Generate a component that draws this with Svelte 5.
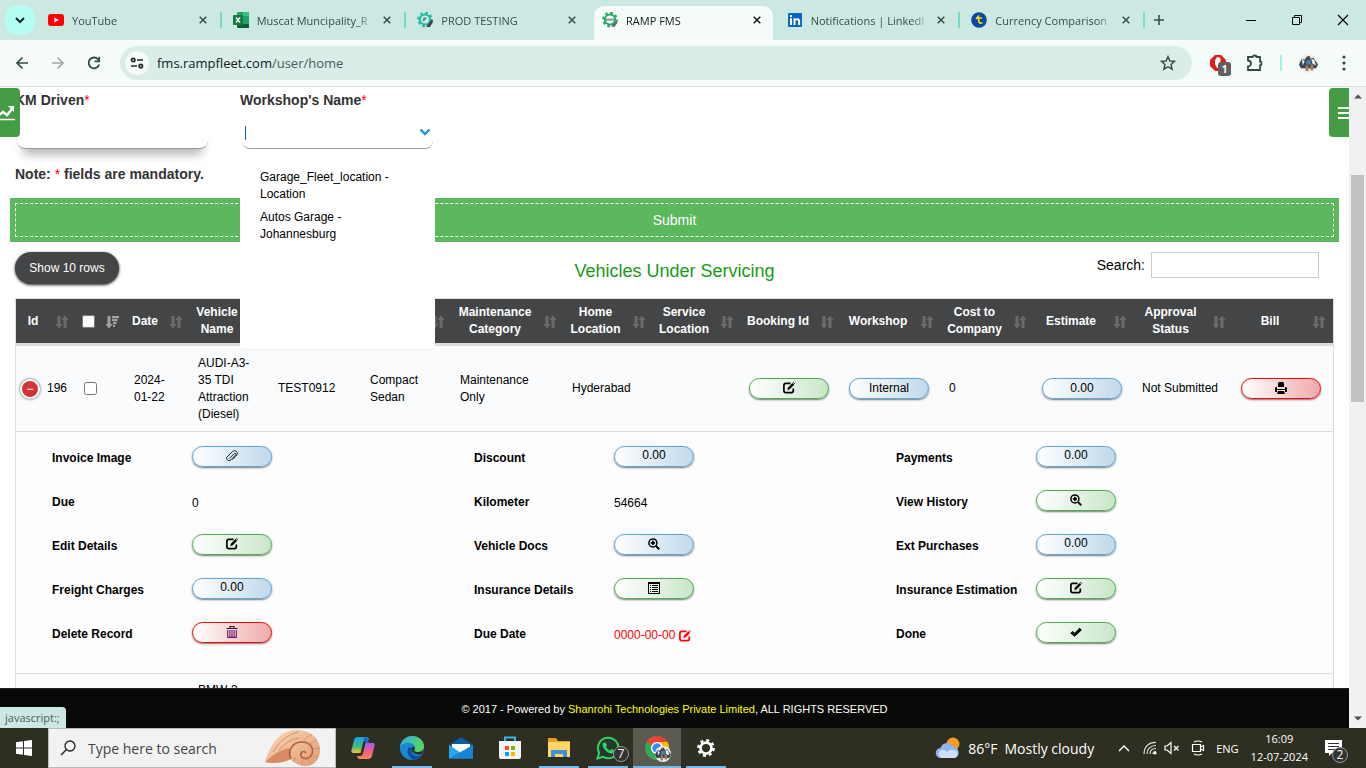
<script>
  const tabs = [
    { title: 'YouTube', icon: 'youtube' },
    { title: 'Muscat Muncipality_R', icon: 'excel' },
    { title: 'PROD TESTING', icon: 'gearteal' },
    { title: 'RAMP FMS', icon: 'geargreen', active: true },
    { title: 'Notifications | LinkedI', icon: 'linkedin' },
    { title: 'Currency Comparison', icon: 'currency' }
  ];

  const columns = [
    { title: 'Id', width: 60 },
    { title: '', width: 50, check: true },
    { title: 'Date', width: 64 },
    { title: 'Vehicle Name', width: 80 },
    { title: '', width: 92 },
    { title: '', width: 90 },
    { title: 'Maintenance Category', width: 112 },
    { title: 'Home Location', width: 89 },
    { title: 'Service Location', width: 88 },
    { title: 'Booking Id', width: 100 },
    { title: 'Workshop', width: 100 },
    { title: 'Cost to Company', width: 93 },
    { title: 'Estimate', width: 100 },
    { title: 'Approval Status', width: 99 },
    { title: 'Bill', width: 100 }
  ];

  const details = [
    { label: 'Invoice Image', color: 'blue', icon: 'clip' },
    { label: 'Discount', color: 'blue', text: '0.00' },
    { label: 'Payments', color: 'blue', text: '0.00' },
    { label: 'Due', text: '0' },
    { label: 'Kilometer', text: '54664' },
    { label: 'View History', color: 'green', icon: 'zoom' },
    { label: 'Edit Details', color: 'green', icon: 'edit' },
    { label: 'Vehicle Docs', color: 'blue', icon: 'zoom' },
    { label: 'Ext Purchases', color: 'blue', text: '0.00' },
    { label: 'Freight Charges', color: 'blue', text: '0.00' },
    { label: 'Insurance Details', color: 'green', icon: 'list' },
    { label: 'Insurance Estimation', color: 'green', icon: 'edit' },
    { label: 'Delete Record', color: 'red', icon: 'trash' },
    { label: 'Due Date', text: '0000-00-00', date: true },
    { label: 'Done', color: 'green', icon: 'check' }
  ];

  const workshops = ['Garage_Fleet_location - Location', 'Autos Garage - Johannesburg'];

  const apps = [
    { name: 'copilot' },
    { name: 'edge', open: true },
    { name: 'mail' },
    { name: 'store' },
    { name: 'folder', open: true },
    { name: 'whatsapp', open: true },
    { name: 'chrome', open: true, current: true },
    { name: 'settings', open: true }
  ];

  let km = $state('');
  let workshop = $state('');
  let search = $state('');
</script>

{#snippet favicon(name)}
  <svg class="favicon" viewBox="0 0 16 16" aria-hidden="true">
    {#if name === 'youtube'}
      <rect x="0" y="2" width="16" height="12" rx="3" fill="#f00" />
      <path d="M6.3 5.4v5.2L10.8 8z" fill="#fff" />
    {:else if name === 'excel'}
      <rect x="4" y="0" width="12" height="16" rx="1" fill="#21a366" />
      <path d="M4 4h6v4H4z" fill="#107c41" />
      <path d="M10 0h5a1 1 0 0 1 1 1v3h-6z" fill="#33c481" />
      <path d="M4 8h6v4H4zM10 12h6v3a1 1 0 0 1-1 1H5a1 1 0 0 1-1-1v-3z" fill="#185c37" />
      <rect x="0" y="3" width="10" height="10" rx="1" fill="#107c41" />
      <path d="M3 5.5l4 5M7 5.5l-4 5" stroke="#fff" stroke-width="1.5" />
    {:else if name === 'gearteal' || name === 'geargreen'}
      {@const tone = name === 'gearteal' ? '#1fb8a0' : '#21a868'}
      <circle cx="8" cy="7.5" r="6.8" fill="none" stroke={tone} stroke-width="2" stroke-dasharray="2.67 2.67" />
      <circle cx="8" cy="7.5" r="5.1" fill="none" stroke={tone} stroke-width="2" />
      {#if name === 'gearteal'}
        <path d="M5.5 9.5l1-4h3l-1 2.5z" fill="#478d86" />
        <path d="M9 15l6-8 1 3-3 5z" fill="#444" />
      {:else}
        <path d="M4 6.6h9v2H4z" fill="#8b9494" />
        <path d="M9 14.6l5-5 1.6.8-3 4.4z" fill="#666" />
      {/if}
    {:else if name === 'linkedin'}
      <rect x="1" y="1" width="14" height="14" rx="1" fill="#0a66c2" />
      <path d="M3 6.2h2V13H3zM3 3h2v2H3zM6.5 6.2h2v1c1-1.6 4.6-1.6 4.6 1.8v4h-2V9.5c0-2.1-2.6-2-2.6 0V13h-2z" fill="#fff" />
    {:else}
      <circle cx="8" cy="8" r="7.8" fill="#0d47a1" />
      <path d="M8 3.5L5 7M6 6h5M8 6c-1 3-.5 6 3.500 4.800" fill="none" stroke="#ffe600" stroke-width="1.6" />
    {/if}
  </svg>
{/snippet}

{#snippet cross()}
  <svg width="8" height="8" viewBox="0 0 8 8" aria-hidden="true">
    <path d="M.7.7l6.6 6.6M7.3.7L.7 7.3" stroke="currentColor" stroke-width="1.5" />
  </svg>
{/snippet}

{#snippet glyph(name)}
  <svg class="glyph" viewBox="0 0 12 12" aria-hidden="true">
    {#if name === 'edit'}
      <path d="M7.5 1.3H2.8Q.9 1.3.9 3.2v5.500q0 1.900 1.900 1.900h5.600q1.900 0 1.900-1.900V6.500" fill="none" stroke="currentColor" stroke-width="1.7" />
      <path d="M4.2 8.3l.8-2.7L9.5 1.1l1.7 1.7-4.5 4.5z" fill="currentColor" />
      <path d="M10.3.3l1.5 1.4" stroke="currentColor" stroke-width="1" />
    {:else if name === 'zoom'}
      <circle cx="4.9" cy="4.9" r="4" fill="none" stroke="currentColor" stroke-width="1.5" />
      <path d="M4.9 2.8v4.2M2.8 4.9h4.2" stroke="currentColor" stroke-width="1.8" />
      <path d="M7.9 7.9l3.3 3.3" stroke="currentColor" stroke-width="2" />
    {:else if name === 'clip'}
      <path d="M3.2 8.6l5-5c1-1 2.300.3 1.400 1.300L5.200 9.500C3.300 12-.7 9.700.9 7.100L6.300 1.600c2.600-2.400 6.500.5 4.500 3.400L6.500 9.500" fill="none" stroke="#222" stroke-width="1" />
    {:else if name === 'list'}
      <path d="M0 0h12v12H0zM1 2v9h10V2z" fill="currentColor" fill-rule="evenodd" />
      <path d="M2 3.500h1M4 3.500h6M2 5.500h1M4 5.500h6M2 7.500h1M4 7.500h6M2 9.500h1M4 9.500h6" stroke="currentColor" stroke-width="1" />
    {:else if name === 'trash'}
      <path d="M.5 2.500h11M4 2V.5h4V2" fill="none" stroke="#222" stroke-width="1.2" />
      <path d="M1.700 4v7.400h8.600V4M3.900 4v7M6 4v7M8.100 4v7" fill="none" stroke="#7a1070" stroke-width="1.1" />
    {:else if name === 'check'}
      <path d="M.3 7.2l2.2-2.3 2.2 1.9L9.6 1.700l2.200 2.200-7.100 6.800z" fill="currentColor" />
    {:else if name === 'print'}
      <path d="M4 0h4l1 1v4H3V1zM0 6l1-1h1v2h8V5h1l1 1v4h-2V8H2v2H0zM3 9h6l1 3H2z" fill="currentColor" />
    {/if}
  </svg>
{/snippet}

{#snippet sorter(sorted)}
  <svg class="sorter" class:sorted viewBox="0 0 14 14" aria-hidden="true">
    <path d="M2.500 1h3v8h2.200L4 13.500.3 9h2.200z" fill="currentColor" />
    {#if sorted}
      <path d="M7 1h7v2.200H7zM7 4h5.500v2.200H7zM8 7h3.500v2.200H8zM8 10h2v2H8z" fill="currentColor" />
    {:else}
      <path d="M8.500 13h3V5h2.200L10 .5 6.300 5h2.200z" fill="currentColor" />
    {/if}
  </svg>
{/snippet}

{#snippet appIcon(name)}
  <svg class="app-icon" viewBox="0 0 24 24" aria-hidden="true">
    {#if name === 'copilot'}
      <defs>
        <linearGradient id="cpa" x1="0" y1="0" x2="0" y2="1">
          <stop offset="0" stop-color="#19a7e8" /><stop offset=".6" stop-color="#40b87a" /><stop offset="1" stop-color="#f4c430" />
        </linearGradient>
        <linearGradient id="cpb" x1="0" y1="0" x2="0" y2="1">
          <stop offset="0" stop-color="#a45cf0" /><stop offset=".5" stop-color="#ed5b8c" /><stop offset="1" stop-color="#fb8a4c" />
        </linearGradient>
      </defs>
      <path d="M7 1h8c2 0 2.500 1 3 3h-3c-2 0-2.500 1-3 3l-2.500 10H3c-3 0-3-2-2-5l2-8c.7-2 2-3 4-3z" fill="url(#cpa)" />
      <path d="M17 23H9c-2 0-2.500-1-3-3h3c2 0 2.500-1 3-3l2.500-10H21c3 0 3 2 2 5l-2 8c-.7 2-2 3-4 3z" fill="url(#cpb)" />
      <path d="M14 1c2 0 2.500 1 3 3l1 3h-3l-2-3c-.5-2 0-3 1-3z" fill="#2464d8" />
    {:else if name === 'edge'}
      <defs>
        <linearGradient id="edg" x1="0" y1="0" x2="1" y2=".4">
          <stop offset="0" stop-color="#28a8ea" /><stop offset="1" stop-color="#59d65c" />
        </linearGradient>
      </defs>
      <circle cx="12" cy="12" r="12" fill="#1787d8" />
      <path d="M0 11C1 4 6 0 12 0c7 0 12 5 12 10 0 4-3 6-6 6-4 0-5-1-3-3C16 9 12 7 8 7c-4 0-7 2-8 4z" fill="url(#edg)" />
      <path d="M9 11c-3 4-1 10 4 12.900 4 .2 7-2 9-5-6 3-13-1-10-7z" fill="#12509e" />
      <path d="M12 11c-2 5 4 9 10 7l2-6c-1 3-4 4.500-7 4-3-.3-3-1.500-2-3 .5-1-2-3-3-2z" fill="#2d2d22" />
    {:else if name === 'mail'}
      <path d="M0 9l12-8 12 8v13H0z" fill="#0a5ba8" />
      <path d="M3 8h18v10H3z" fill="#f6fafd" />
      <path d="M0 9l12 8 12-8v13.500H0z" fill="#2aa7ec" />
      <path d="M0 22.500L24 9v13.500z" fill="#1684d2" />
    {:else if name === 'store'}
      <path d="M7 6V1.500h10V6" fill="none" stroke="#35b5f0" stroke-width="2" />
      <path d="M1 5h22v16q0 2-2 2H3q-2 0-2-2z" fill="#f4f4f4" />
      <path d="M7 10h4v4H7z" fill="#f25022" /><path d="M13 10h4v4h-4z" fill="#7fba00" />
      <path d="M7 16h4v4H7z" fill="#00a4ef" /><path d="M13 16h4v4h-4z" fill="#ffb900" />
    {:else if name === 'folder'}
      <path d="M1 2h8l2 3h12v4H1z" fill="#e3a21a" />
      <path d="M1 6h22v15H1z" fill="#ffd768" />
      <path d="M4 21v-7h16v7h-4v-3H8v3z" fill="#3f92d9" />
    {:else if name === 'whatsapp'}
      <path d="M1.500 22.500l1.600-5.800a10.300 10.300 0 1 1 4 4.200z" fill="#25382c" stroke="#2fd463" stroke-width="2" />
      <path d="M8 6.500c-2 1-2 3 0 6s5 5 7.500 5 3-3 2-3.500l-2.300-1-1.200 1.500c-2-.8-3.200-2-4-3.700l1-1.300-1-2.500z" fill="#2fd463" />
    {:else if name === 'chrome'}
      <circle cx="12" cy="12" r="12" fill="#34a853" />
      <path d="M12 12L1.600 6A12 12 0 0 1 22.400 6z" fill="#ea4335" />
      <path d="M12 12V6h10.400A12 12 0 0 1 12 24z" fill="#fbbc05" />
      <circle cx="12" cy="12" r="6" fill="#fff" /><circle cx="12" cy="12" r="4.700" fill="#4285f4" />
    {:else}
      <circle cx="12" cy="12" r="6" fill="none" stroke="#fff" stroke-width="3" />
      <circle cx="12" cy="12" r="8.300" fill="none" stroke="#fff" stroke-width="2.800" stroke-dasharray="3.260 3.260" />
    {/if}
  </svg>
{/snippet}

{#snippet portrait()}
  <svg class="portrait" viewBox="0 0 20 20" aria-hidden="true">
    <circle cx="10" cy="10" r="10" fill="#e9eef0" />
    <path d="M0 11l3-6 3 1 2-3 4 2 3-1 5 7-2 4H2z" fill="#3a4450" />
    <path d="M3 5l3 3-2 4zM13 5l3 1 2 6-4-2z" fill="#f3f3f3" />
    <path d="M8 6h4l1 5H7z" fill="#4d7fae" />
    <path d="M7 12h3v6H7zM12 11h3v6h-3z" fill="#a77b55" />
    <circle cx="10" cy="4" r="2" fill="#5b4338" />
  </svg>
{/snippet}

<div class="screen">
  <header class="tabbar">
    <button class="tab-search" aria-label="Search tabs">
      <svg width="10" height="7" viewBox="0 0 10 7"><path d="M1 1l4 4 4-4" fill="none" stroke="#123" stroke-width="2" /></svg>
    </button>
    <div class="tabs">
      {#each tabs as tab}
        <div class="tab" class:active={tab.active}>
          {@render favicon(tab.icon)}
          <span class="tab-title">{tab.title}</span>
          <button class="tab-close" aria-label="Close {tab.title}">{@render cross()}</button>
        </div>
      {/each}
    </div>
    <button class="new-tab" aria-label="New tab">
      <svg width="12" height="12" viewBox="0 0 12 12"><path d="M6 1v10M1 6h10" stroke="#30504b" stroke-width="1.6" /></svg>
    </button>
    <div class="window-buttons">
      <button aria-label="Minimize"><svg width="12" height="12" viewBox="0 0 12 12"><path d="M1 6.500h10" stroke="#000" /></svg></button>
      <button aria-label="Restore"><svg width="12" height="12" viewBox="0 0 12 12"><path d="M1.500 3.500h7v7h-7zM3.500 3.500v-2h7v7h-2" fill="none" stroke="#000" /></svg></button>
      <button aria-label="Close"><svg width="12" height="12" viewBox="0 0 12 12"><path d="M1 1l10 10M11 1L1 11" stroke="#000" stroke-width="1.2" /></svg></button>
    </div>
  </header>

  <nav class="toolbar">
    <button class="nav-button" aria-label="Back">
      <svg width="14" height="14" viewBox="0 0 14 14"><path d="M13 7H2M7.500 1.500L2 7l5.500 5.500" fill="none" stroke="#2f4b47" stroke-width="1.7" /></svg>
    </button>
    <button class="nav-button" aria-label="Forward">
      <svg width="14" height="14" viewBox="0 0 14 14"><path d="M1 7h11M6.500 1.500L12 7l-5.500 5.500" fill="none" stroke="#9fa8a5" stroke-width="1.7" /></svg>
    </button>
    <button class="nav-button" aria-label="Reload">
      <svg width="14" height="14" viewBox="0 0 14 14"><path d="M12.200 8.500A5.400 5.400 0 1 1 11 3.200L12.500 5" fill="none" stroke="#2f4b47" stroke-width="1.8" /><path d="M13 .8v5.400H7.600V4.600h3.800V.8z" fill="#2f4b47" /></svg>
    </button>
    <div class="address">
      <button class="site-info" aria-label="Site information">
        <svg width="14" height="12" viewBox="0 0 14 12"><g fill="none" stroke="#1f2a29" stroke-width="1.7"><circle cx="3.200" cy="3" r="1.700" /><path d="M7 3h6M1 9h6" /><circle cx="10.800" cy="9" r="1.700" /></g></svg>
      </button>
      <span class="url">fms.rampfleet.com<span>/user/home</span></span>
      <svg class="star" width="16" height="16" viewBox="0 0 16 16"><path d="M8 1.600l1.900 4.400 4.700.4-3.600 3.100 1.100 4.700L8 11.700l-4.100 2.500L5 9.500 1.400 6.400l4.700-.4z" fill="none" stroke="#3a4a48" stroke-width="1.4" /></svg>
    </div>
    <div class="extensions">
      <span class="blocker">
        <svg width="16" height="16" viewBox="0 0 16 16"><path d="M5 0h6l5 5v6l-5 5H5l-5-5V5z" fill="#e21b1b" /><path d="M5 9V4.500h1.300V2.500h1.400V2h1.400v.8h1.400v5l1.500-.5-2 5.700H7z" fill="#fff" /></svg>
        <span class="blocker-count">1</span>
      </span>
      <svg class="puzzle" width="18" height="18" viewBox="0 0 18 18"><path d="M2 3h4.500a2 1.500 0 0 1 4 0H14v4.500a1.500 2 0 0 1 0 4V16H2v-3.500a3 3 0 0 0 0-6z" fill="none" stroke="#2f4b47" stroke-width="1.8" /></svg>
      <span class="divider"></span>
      {@render portrait()}
      <svg class="dots" width="4" height="16" viewBox="0 0 4 16"><g fill="#2f4b47"><circle cx="2" cy="2" r="1.600" /><circle cx="2" cy="8" r="1.600" /><circle cx="2" cy="14" r="1.600" /></g></svg>
    </div>
  </nav>

  <div class="viewport">
    <main class="page">
      <form class="service-form" onsubmit={(e) => e.preventDefault()}>
        <div class="fields">
          <div class="field">
            <label for="km">KM Driven<b>*</b></label>
            <input id="km" class="raised" type="text" bind:value={km} />
          </div>
          <div class="field">
            <label for="workshop">Workshop's Name<b>*</b></label>
            <input id="workshop" type="text" role="combobox" aria-expanded="true" aria-controls="workshop-list" bind:value={workshop} />
            <span class="caret"></span>
            <svg class="chevron" width="12" height="8" viewBox="0 0 12 8"><path d="M1.500 1.500L6 6l4.500-4.500" fill="none" stroke="#1e90e0" stroke-width="2.4" /></svg>
            <ul id="workshop-list" class="options" role="listbox">
              {#each workshops as option}
                <li role="option" aria-selected="false">{option}</li>
              {/each}
            </ul>
          </div>
        </div>
        <p class="note">Note: <b>*</b> fields are mandatory.</p>
        <button class="submit" type="submit"><span>Submit</span></button>
      </form>

      <div class="table-tools">
        <button class="show-rows">Show 10 rows</button>
        <h3>Vehicles Under Servicing</h3>
        <label class="search">Search: <input type="text" bind:value={search} /></label>
      </div>

      <table>
        <colgroup>
          {#each columns as column}
            <col style="width: {column.width}px" />
          {/each}
        </colgroup>
        <thead>
          <tr>
            {#each columns as column}
              <th>
                {#if column.check}
                  <input type="checkbox" aria-label="Select all" />
                {:else}
                  {column.title}
                {/if}
                {@render sorter(column.check)}
              </th>
            {/each}
          </tr>
        </thead>
        <tbody>
          <tr class="record">
            <td><span class="id-cell"><button class="collapse" aria-label="Collapse row">−</button>196</span></td>
            <td><input type="checkbox" aria-label="Select 196" /></td>
            <td>2024-01-22</td>
            <td>AUDI-A3-35 TDI Attraction (Diesel)</td>
            <td>TEST0912</td>
            <td>Compact Sedan</td>
            <td>Maintenance Only</td>
            <td>Hyderabad</td>
            <td></td>
            <td><button class="pill green" aria-label="Edit booking">{@render glyph('edit')}</button></td>
            <td><button class="pill blue">Internal</button></td>
            <td>0</td>
            <td><button class="pill blue">0.00</button></td>
            <td>Not Submitted</td>
            <td><button class="pill red" aria-label="Print bill">{@render glyph('print')}</button></td>
          </tr>
          <tr class="expanded">
            <td colspan="15">
              <ul class="details">
                {#each details as item}
                  <li>
                    <span class="detail-label">{item.label}</span>
                    {#if item.color}
                      <button class="pill {item.color}" aria-label={item.label}>
                        {#if item.icon}{@render glyph(item.icon)}{:else}{item.text}{/if}
                      </button>
                    {:else if item.date}
                      <a class="detail-value due-date" href="#due">{item.text} {@render glyph('edit')}</a>
                    {:else}
                      <span class="detail-value">{item.text}</span>
                    {/if}
                  </li>
                {/each}
              </ul>
            </td>
          </tr>
          <tr class="record next">
            <td></td><td></td><td></td>
            <td>BMW-3-<br />Series</td>
            <td colspan="11"></td>
          </tr>
        </tbody>
      </table>
    </main>

    <button class="side-tab left" aria-label="Reports">
      <svg width="16" height="16" viewBox="0 0 16 16"><path d="M0 10l4-3 4 3 5-6" fill="none" stroke="#fff" stroke-width="2.4" /><path d="M9 1h6v6z" fill="#fff" /><path d="M0 14.500h16" stroke="#fff" stroke-width="1.5" /></svg>
    </button>
    <button class="side-tab right" aria-label="Menu">
      <svg width="16" height="16" viewBox="0 0 16 16"><path d="M0 3h16M0 8h16M0 13h16" stroke="#fff" stroke-width="2" /></svg>
    </button>

    <footer>© 2017 - Powered by&nbsp;<a href="#company">Shanrohi Technologies Private Limited</a>, ALL RIGHTS RESERVED</footer>
    <div class="status">javascript:;</div>

    <div class="scrollbar">
      <svg width="8" height="5" viewBox="0 0 8 5"><path d="M0 4.500L4 .5l4 4z" fill="#505050" /></svg>
      <div class="track"><div class="thumb"></div></div>
      <svg width="8" height="5" viewBox="0 0 8 5"><path d="M0 .5l4 4 4-4z" fill="#505050" /></svg>
    </div>
  </div>

  <div class="taskbar">
    <button class="start" aria-label="Start">
      <svg width="16" height="16" viewBox="0 0 16 16"><path d="M0 2.200l7-1v6.300H0zM8 1.100L16 0v7.500H8zM0 8.500h7v6.300l-7-1zM8 8.500h8V16l-8-1.100z" fill="#fff" /></svg>
    </button>
    <div class="task-search">
      <svg width="16" height="16" viewBox="0 0 16 16"><circle cx="10" cy="6" r="5" fill="none" stroke="#222" stroke-width="1.3" /><path d="M6.500 9.500L1 15" stroke="#222" stroke-width="1.5" /></svg>
      <input type="text" aria-label="Search" placeholder="Type here to search" />
      <svg width="56" height="38" viewBox="0 0 56 38">
        <defs>
          <linearGradient id="shl" x1="0" y1="0" x2="1" y2="1"><stop offset="0" stop-color="#fbd9b8" /><stop offset="1" stop-color="#e09a70" /></linearGradient>
        </defs>
        <path d="M0 33C6 14 15 1 32 1c14 0 23 9 23 20 0 9-6 16-14 16-7 0-12-3-15-7-8 4-18 5-26 3z" fill="url(#shl)" />
        <path d="M0 33C8 26 16 20 26 19c0 4-1 8 0 11-8 4-18 5-26 3z" fill="#d98a62" />
        <path d="M26 30c-4-9 2-17 11-17 8 0 12 6 10 12-2 5-9 6-11 2-1-4 3-6 5-3" fill="none" stroke="#b0623f" stroke-width="1.6" />
        <path d="M8 23C14 13 22 6 33 3M14 22c4-7 12-12 20-13M38 13c3-4 6-7 9-7M44 15l8-4M48 20l7-1M48 26l5 3M43 29l3 6M37 30v6M31 28l-3 5" fill="none" stroke="#d2936c" stroke-width="1" />
      </svg>
    </div>
    <div class="apps">
      {#each apps as app}
        <button class="app" class:open={app.open} class:current={app.current} aria-label={app.name}>
          {@render appIcon(app.name)}
          {#if app.name === 'whatsapp'}<span class="badge">7</span>{/if}
          {#if app.name === 'chrome'}<span class="profile">{@render portrait()}</span>{/if}
        </button>
      {/each}
    </div>
    <div class="tray">
      <svg class="weather" width="26" height="22" viewBox="0 0 26 22">
        <circle cx="18" cy="7" r="6.500" fill="#f59a23" />
        <path d="M6 21a5 5 0 0 1-.5-10A6.500 6.500 0 0 1 17.500 9.500 6 6 0 0 1 20 21z" fill="#8fb2f0" />
        <path d="M6 21a4.500 4.500 0 0 1 0-8c3-1 5 1 6 2 2-3 8-3 10 0 2 2 0 6-3 6z" fill="#cfdffa" />
      </svg>
      <span class="temp">86°F</span>
      <span class="sky">Mostly cloudy</span>
      <svg class="up" width="12" height="8" viewBox="0 0 12 8"><path d="M1 7l5-5 5 5" fill="none" stroke="#fff" stroke-width="1.4" /></svg>
      <svg class="wifi" width="14" height="14" viewBox="0 0 14 14"><g fill="none" stroke="#ddd" stroke-width="1.2"><path d="M1 13C1 6 6 1 13 1.500M4 13c0-5 3.500-8.500 9-8.500M7 13c0-3.300 2-5.500 6-5.500M10 13c0-1.500 1-2.500 3-2.500" /></g><circle cx="12" cy="12" r="1.600" fill="#fff" /></svg>
      <svg class="volume" width="16" height="14" viewBox="0 0 16 14"><path d="M1 5h2l4-3.500v11L3 9H1z" fill="none" stroke="#fff" stroke-width="1.2" /><path d="M10 5l4.500 4.500M14.500 5L10 9.500" stroke="#fff" stroke-width="1.2" /></svg>
      <svg class="meet" width="14" height="16" viewBox="0 0 14 16"><path d="M3 2q4-2 8 0M3 14q4 2 8 0M1.500 4.500h8v7h-8zM9.500 7L12.500 5.500v5L9.500 9" fill="none" stroke="#fff" stroke-width="1.2" /></svg>
      <span class="lang">ENG</span>
      <time class="clock"><span>16:09</span><span>12-07-2024</span></time>
      <span class="notify">
        <svg width="17" height="16" viewBox="0 0 17 16"><path d="M0 0h17v13H7l-3 3v-3H0z" fill="#fff" /><path d="M3 3.500h11M3 6.500h11M3 9.500h7" stroke="#333" /></svg>
        <span class="badge">2</span>
      </span>
    </div>
  </div>
</div>

<style>
  :global(body) {
    margin: 0;
    overflow: hidden;
  }

  .screen {
    display: flex;
    flex-direction: column;
    height: 100vh;
    font-family: "Open Sans", "Noto Sans", sans-serif;
    font-size: 12px;
  }

  button {
    border: 0;
    padding: 0;
    background: none;
    font: inherit;
    color: inherit;
    display: flex;
    align-items: center;
    justify-content: center;
  }

  input {
    box-sizing: border-box;
    font: inherit;
  }

  svg {
    display: block;
    flex: none;
  }

  ul, h3, p {
    margin: 0;
    padding: 0;
    list-style: none;
  }

  /* browser tabs */
  .tabbar {
    display: flex;
    flex: none;
    height: 40px;
    background: #cce8e2;
    color: #30504b;
  }

  .tab-search {
    width: 28px;
    height: 28px;
    margin: 6px 3px 6px 6px;
    border-radius: 9px;
    background: #b3fff3;
  }

  .tabs {
    display: flex;
    flex: 0 1 1108px;
    min-width: 0;
  }

  .tab {
    position: relative;
    display: flex;
    flex: 1;
    align-items: center;
    min-width: 0;
    box-sizing: border-box;
    padding: 0 15px 0 11px;
  }

  .tab::after {
    content: "";
    position: absolute;
    right: 0;
    top: 12px;
    width: 2px;
    height: 16px;
    background: #74dccb;
  }

  .tab:has(+ .active)::after, .tab.active::after {
    display: none;
  }

  .tab.active {
    margin: 6px 3px 0 3px;
    padding: 0 12px 6px 8px;
    border-radius: 10px 10px 0 0;
    background: #f4fbf9;
    color: #111c1a;
  }

  .favicon {
    width: 16px;
    height: 16px;
  }

  .tab-title {
    flex: 1;
    min-width: 0;
    margin: 0 8px;
    overflow: hidden;
    font-size: 11px;
    white-space: nowrap;
    mask-image: linear-gradient(90deg, #000 85%, transparent);
  }

  .new-tab {
    width: 28px;
  }

  .window-buttons {
    display: flex;
    margin-left: auto;
  }

  .window-buttons button {
    width: 46px;
  }

  /* address bar */
  .toolbar {
    display: flex;
    flex: none;
    align-items: center;
    height: 46px;
    padding-left: 4px;
    border-bottom: 1px solid #d5e3df;
    background: #f4fbf9;
  }

  .nav-button {
    width: 36px;
    height: 36px;
  }

  .address {
    display: flex;
    flex: 1;
    align-items: center;
    height: 34px;
    margin-left: 8px;
    border-radius: 17px;
    background: #dbede8;
  }

  .site-info {
    width: 24px;
    height: 24px;
    margin: 0 8px 0 5px;
    border-radius: 12px;
    background: #f4fbf9;
  }

  .url {
    flex: 1;
    font-size: 13px;
    color: #10201d;
  }

  .url span {
    color: #44605b;
  }

  .star {
    margin-right: 16px;
  }

  .extensions {
    display: flex;
    align-items: center;
    padding: 0 20px 0 18px;
  }

  .blocker {
    position: relative;
    margin-right: 20px;
  }

  .blocker-count {
    position: absolute;
    left: 8px;
    top: 7px;
    width: 13px;
    border-radius: 3px;
    background: #5f6160;
    color: #fff;
    font-size: 10px;
    font-weight: 700;
    line-height: 14px;
    text-align: center;
  }

  .divider {
    width: 2px;
    height: 16px;
    margin: 0 17px 0 16px;
    background: #a4f2e6;
  }

  .portrait {
    width: 19px;
    height: 19px;
  }

  .dots {
    margin-left: 24px;
  }

  /* web page */
  .viewport {
    position: relative;
    display: flex;
    flex: 1;
    min-height: 0;
    overflow: hidden;
    background: #fff;
    font-family: "Liberation Sans", Arial, sans-serif;
    color: #000;
  }

  .page {
    flex: 1;
    min-width: 0;
  }

  .service-form {
    padding: 4px 10px 0;
    font-size: 14px;
    color: #333;
  }

  .fields {
    display: flex;
    gap: 30px;
    padding: 0 5px;
  }

  .field {
    position: relative;
    width: 195px;
  }

  .field label, .note {
    display: block;
    font-weight: 700;
    line-height: 18px;
  }

  .field b, .note b {
    font-weight: 400;
    color: red;
  }

  .field input {
    display: block;
    width: 191px;
    height: 32px;
    margin: 8px 2px 0;
    padding: 0 8px;
    border: 0;
    border-bottom: 1px solid #999;
    border-radius: 8px;
    background: #fff;
    outline: 0;
  }

  .field input.raised {
    box-shadow: 0 12px 10px -6px #bbb;
  }

  .caret {
    position: absolute;
    left: 5px;
    top: 35px;
    width: 1px;
    height: 14px;
    background: #0b5f9e;
  }

  .chevron {
    position: absolute;
    right: 4px;
    top: 37px;
  }

  .options {
    position: absolute;
    z-index: 2;
    top: 59px;
    left: 0;
    right: 0;
    height: 180px;
    padding-top: 19px;
    border-bottom: 1px solid #f0f0f2;
    border-radius: 0 0 4px 4px;
    background: #fff;
    font-size: 12px;
    line-height: 17px;
    color: #000;
  }

  .options li {
    padding: 0 40px 6px 20px;
  }

  .note {
    margin: 16px 5px 15px;
  }

  .submit {
    width: 100%;
    box-sizing: border-box;
    height: 44px;
    padding: 5px;
    background: #5cb85c;
    color: #fff;
  }

  .submit span {
    flex: 1;
    border: 1px dashed #fff;
    line-height: 32px;
  }

  .table-tools {
    display: grid;
    grid-template-columns: 1fr auto 1fr;
    align-items: start;
    height: 46px;
    padding: 10px 15px 0;
  }

  .show-rows {
    width: 104px;
    height: 32px;
    border-radius: 16px;
    background: #444547;
    box-shadow: 0 1px 3px #222;
    color: #fff;
  }

  h3 {
    margin-top: 8px;
    font-size: 18px;
    font-weight: 400;
    line-height: 22px;
    color: #189a18;
  }

  .search {
    display: flex;
    justify-self: end;
    align-items: center;
    gap: 6px;
    margin-right: 15px;
    font-size: 14px;
  }

  .search input {
    width: 168px;
    height: 26px;
    border: 1px solid #ccc;
  }

  table {
    width: calc(100% - 30px);
    margin: 0 15px;
    border: 1px solid #ddd;
    border-spacing: 0;
    table-layout: fixed;
    line-height: 17px;
  }

  th {
    position: relative;
    height: 34px;
    padding: 5px 32px 5px 6px;
    border-bottom: 3px solid #ddd;
    background: #444547;
    color: #fff;
    vertical-align: middle;
  }

  th input, td input {
    display: block;
    margin: 0;
  }

  th:nth-child(10) {
    white-space: nowrap;
  }

  .sorter {
    position: absolute;
    right: 7px;
    bottom: 14px;
    width: 14px;
    height: 14px;
    color: #696a6c;
  }

  .sorter.sorted {
    color: #a2a2a3;
  }

  td {
    padding: 0 8px;
  }

  .record td {
    height: 85px;
    border-bottom: 1px solid #ddd;
    background: #f9fbfd;
  }

  .record td:first-child {
    padding-left: 4px;
  }

  .id-cell {
    display: flex;
    align-items: center;
    gap: 7px;
  }

  .collapse {
    width: 20px;
    height: 20px;
    box-sizing: border-box;
    border: 2px solid #fff;
    border-radius: 10px;
    background: #d33333;
    box-shadow: 0 0 3px #444;
    color: #fff;
    line-height: 14px;
  }

  .next td {
    padding-top: 8px;
    vertical-align: top;
  }

  .pill {
    width: 80px;
    height: 21px;
    box-sizing: border-box;
    padding-bottom: 1px;
    border: 1px solid;
    border-radius: 11px;
    box-shadow: 0 1px 2px #777;
    color: #000;
  }

  .blue {
    border-color: #5aa5dc;
    background: linear-gradient(90deg, #fff, #c0d9eb);
  }

  .green {
    border-color: #4cae4c;
    background: linear-gradient(90deg, #fff, #c8e6c8);
  }

  .red {
    border-color: #f00;
    background: linear-gradient(90deg, #fff, #f0aaaa);
  }

  .glyph {
    width: 12px;
    height: 12px;
  }

  .expanded td {
    padding: 2px 15px 19px 36px;
    border-bottom: 1px solid #ddd;
    background: #fdfdfd;
  }

  .details {
    display: grid;
    grid-template-columns: repeat(3, 1fr);
    grid-auto-rows: 44px;
  }

  .details li {
    display: flex;
    align-items: center;
  }

  .detail-label {
    width: 140px;
    padding-top: 5px;
    font-weight: 700;
  }

  .detail-value {
    padding-top: 7px;
  }

  .due-date {
    display: flex;
    align-items: center;
    gap: 4px;
    color: red;
    text-decoration: none;
  }

  .side-tab {
    position: absolute;
    top: 1px;
    width: 20px;
    height: 49px;
    overflow: hidden;
    background: #449d44;
  }

  .side-tab.left {
    left: 0;
    justify-content: flex-end;
    padding-right: 5px;
    border-radius: 0 4px 4px 0;
  }

  .side-tab.right {
    right: 17px;
    justify-content: flex-start;
    padding-left: 9px;
    border-radius: 4px 0 0 4px;
  }

  footer {
    position: absolute;
    left: 0;
    right: 17px;
    bottom: 0;
    display: flex;
    align-items: center;
    justify-content: center;
    box-sizing: border-box;
    height: 40px;
    border-top: 1px solid #222;
    background: #090907;
    color: #fff;
    font-size: 11px;
  }

  footer a {
    color: #ff0;
    text-decoration: none;
  }

  .status {
    position: absolute;
    left: 0;
    bottom: 0;
    padding: 0 6px 0 5px;
    border-radius: 0 4px 0 0;
    background: #cce8e2;
    color: #44605b;
    font-family: "Open Sans", sans-serif;
    font-size: 11px;
    line-height: 21px;
  }

  .scrollbar {
    display: flex;
    flex: none;
    flex-direction: column;
    align-items: center;
    width: 17px;
    box-sizing: border-box;
    padding: 7px 0;
    background: #f1f1f1;
  }

  .track {
    flex: 1;
    width: 13px;
    padding-top: 76px;
  }

  .thumb {
    height: 42%;
    background: #c1c1c1;
  }

  /* taskbar */
  .taskbar {
    display: flex;
    flex: none;
    height: 40px;
    background: #2f2e22;
    color: #fff;
  }

  .start {
    width: 48px;
  }

  .task-search {
    display: flex;
    align-items: center;
    width: 288px;
    box-sizing: border-box;
    padding: 0 14px 0 11px;
    border: 1px solid #bbb;
    background: #f2f2f2;
  }

  .task-search input {
    flex: 1;
    min-width: 0;
    padding: 0 0 0 12px;
    border: 0;
    background: none;
    font-size: 14px;
  }

  .task-search input::placeholder {
    color: #444;
  }

  .apps {
    display: flex;
    gap: 1px;
    margin-left: 3px;
  }

  .app {
    position: relative;
    width: 48px;
  }

  .app-icon {
    width: 24px;
    height: 24px;
  }

  .app[aria-label="settings"] .app-icon {
    width: 22px;
    height: 22px;
  }

  .app.open::after {
    content: "";
    position: absolute;
    left: 4px;
    right: 4px;
    bottom: 0;
    height: 2px;
    background: #76b9ed;
  }

  .app.current {
    background: #5a5a50;
  }

  .app.current::after {
    left: 0;
    right: 0;
  }

  .badge {
    position: absolute;
    left: 29px;
    top: 18px;
    width: 14px;
    border: 1px solid #999;
    border-radius: 8px;
    background: #333;
    color: #fff;
    line-height: 14px;
    text-align: center;
  }

  .profile {
    position: absolute;
    left: 22px;
    top: 18px;
  }

  .profile .portrait {
    width: 16px;
    height: 16px;
  }

  .tray {
    display: flex;
    align-items: center;
    margin-left: auto;
    padding-right: 24px;
    white-space: nowrap;
  }

  .temp, .sky {
    margin-left: 7px;
    font-size: 14px;
  }

  .up {
    margin: 0 13px 0 24px;
  }

  .volume {
    margin: 0 11px 0 7px;
  }

  .lang {
    margin: 0 12px 0 11px;
    font-size: 11px;
  }

  .clock {
    display: flex;
    flex-direction: column;
    align-items: center;
    font-size: 11px;
    line-height: 18px;
  }

  .notify {
    position: relative;
    margin-left: 17px;
  }

  .notify .badge {
    left: 7px;
    top: 7px;
  }
</style>
